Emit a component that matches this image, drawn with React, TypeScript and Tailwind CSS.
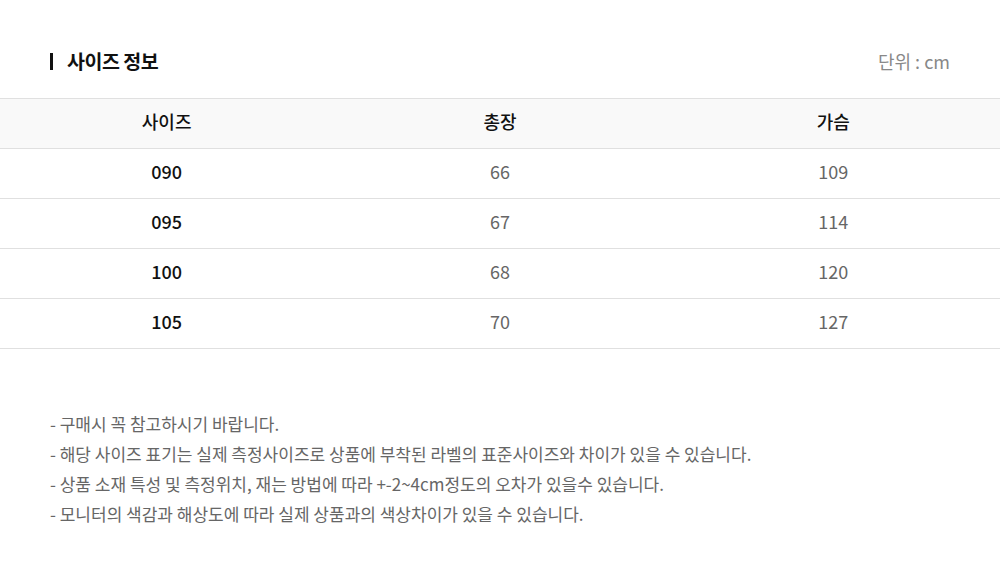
import React from "react";

const rows = [
  ["090", "66", "109"],
  ["095", "67", "114"],
  ["100", "68", "120"],
  ["105", "70", "127"],
];

const notes = [
  "- 구매시 꼭 참고하시기 바랍니다.",
  "- 해당 사이즈 표기는 실제 측정사이즈로 상품에 부착된 라벨의 표준사이즈와 차이가 있을 수 있습니다.",
  "- 상품 소재 특성 및 측정위치, 재는 방법에 따라 +-2~4cm정도의 오차가 있을수 있습니다.",
  "- 모니터의 색감과 해상도에 따라 실제 상품과의 색상차이가 있을 수 있습니다.",
];

export default function App() {
  return (
    <div
      className="w-[1000px] h-[571px] bg-white"
      style={{ fontFamily: '"Noto Sans CJK KR", "Noto Sans", sans-serif' }}
    >
      <div className="flex items-center justify-between px-[50px] h-[98px] pt-[24px]">
        <div className="flex items-center gap-[14px]">
          <div className="w-[3px] h-[17px] bg-[#111]" />
          <span className="text-[19.5px] font-bold text-[#111] tracking-[-0.5px]">사이즈 정보</span>
        </div>
        <span className="text-[18px] text-[#888]">단위 : cm</span>
      </div>
      <div className="border-t border-[#e0e0e0]">
        <div className="grid grid-cols-3 h-[50px] bg-[#f9f9f9] border-b border-[#e0e0e0] items-center text-center text-[18px] font-medium text-[#111] pb-[4px]">
          <div>사이즈</div>
          <div>총장</div>
          <div>가슴</div>
        </div>
        {rows.map((r) => (
          <div
            key={r[0]}
            className="grid grid-cols-3 h-[50px] border-b border-[#e0e0e0] items-center text-center text-[18px] pb-[4px]"
          >
            <div className="font-medium text-[#111]">{r[0]}</div>
            <div className="text-[#666]">{r[1]}</div>
            <div className="text-[#666]">{r[2]}</div>
          </div>
        ))}
      </div>
      <div className="px-[50px] pt-[60px] text-[17px] leading-[30px] text-[#666]">
        {notes.map((n) => (
          <div key={n}>{n}</div>
        ))}
      </div>
    </div>
  );
}
